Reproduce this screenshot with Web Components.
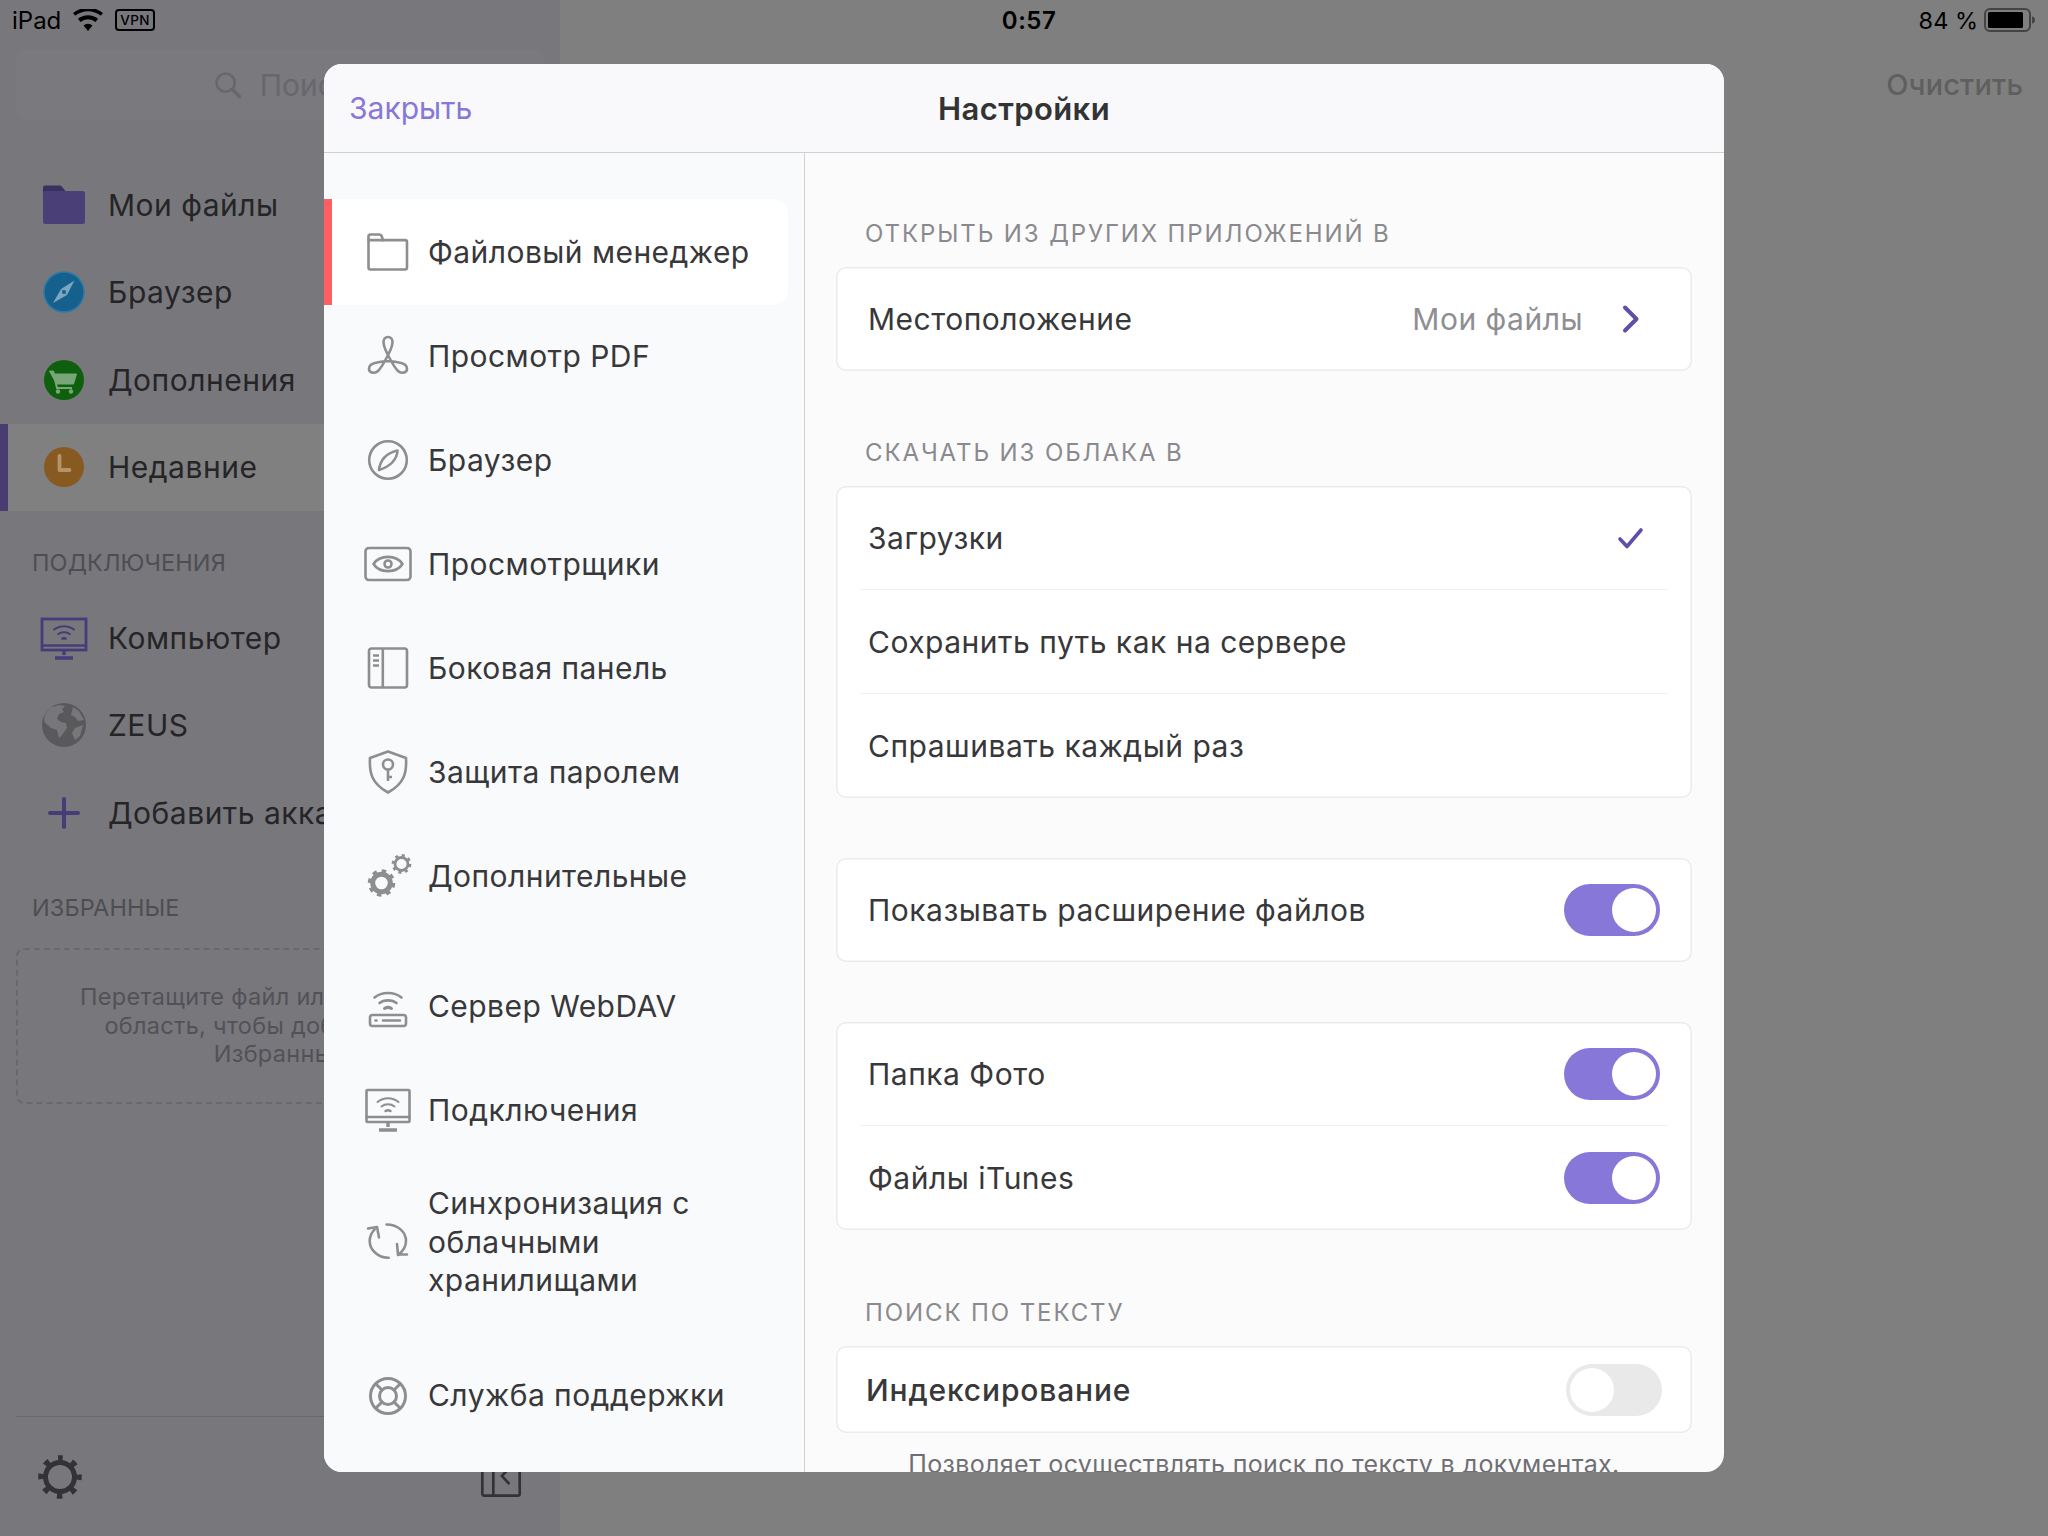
<!DOCTYPE html>
<html lang="ru">
<head>
<meta charset="utf-8">
<title>Настройки</title>
<style>
  html, body { margin: 0; padding: 0; }
  body { font-family: Inter, "Noto Sans", sans-serif; width: 2048px; height: 1536px; overflow: hidden; }
</style>
</head>
<body>
<app-shell>
  <status-bar slot="status"></status-bar>
  <side-panel slot="panel"></side-panel>
  <settings-modal slot="modal"></settings-modal>
</app-shell>

<script>
const GREY = `fill="none" stroke="#8e8e8e" stroke-width="2.6" stroke-linecap="round" stroke-linejoin="round"`;
const ICONS = {
  folder: `<g ${GREY}><path d="M4.500 12V8.500a2 2 0 0 1 2-2h8.500a3 3 0 0 1 2.800 2l1.200 3.600h22a2 2 0 0 1 2 2v25.400a2 2 0 0 1-2 2h-34.500a2 2 0 0 1-2-2Z"/><path d="M4.500 12.100h15"/></g>`,
  pdf: `<path ${GREY} d="M24 5C21 5 19.500 7.500 19.500 10C19.500 15 22 19 24.500 24C27 29 30 35 34 39C37 42 43 41 43 37C43 33 39 31 35 30.500C28 29 20 29 13 30.500C9 31 5 33 5 37C5 41 11 42 14 39C18 35 21 29 23.500 24C26 19 28.500 15 28.500 10C28.500 7.500 27 5 24 5Z"/>`,
  compass: `<g ${GREY}><circle cx="24" cy="24" r="18.800"/><path d="M33.500 14.500c-.5 7-4.500 15-18.500 19.500 1-9 6-16.500 18.500-19.500Z"/></g>`,
  eye: `<g ${GREY}><rect x="1.500" y="8" width="45" height="32" rx="3.500"/><path d="M9.500 24c6-9.500 23-9.500 29 0-6 9.500-23 9.500-29 0Z"/><circle cx="24" cy="24" r="3.500"/></g>`,
  sidebar: `<g ${GREY}><rect x="5" y="4.500" width="38" height="39" rx="2.500"/><path d="M18.800 4.500v39M9 11.500h6M9 16.500h6M9 21.500h6" stroke-linecap="butt"/></g>`,
  shield: `<g ${GREY}><path d="M24 3.500 42 10c.8 14-1 25-18 34.500C7 35 5.200 24 6 10Z"/><circle cx="24" cy="16.500" r="5"/><path d="M24 21.500V33M24 29h4" stroke-linecap="butt"/></g>`,
  gears: `<g fill="none" stroke="#8e8e8e"><circle cx="17.500" cy="31" r="8.800" stroke-width="5"/><circle cx="17.500" cy="31" r="12" stroke-width="3.500" stroke-dasharray="4.400 5"/><circle cx="37.500" cy="12" r="6.500" stroke-width="2.800"/><circle cx="37.500" cy="12" r="8.600" stroke-width="2.600" stroke-dasharray="3 3.750"/></g>`,
  router: `<g ${GREY}><path d="M10.500 15.500c7.500-6 19.500-6 27 0M15.500 21c4.500-3.500 12.500-3.500 17 0"/><path d="M20.500 26.500c2-1.300 5-1.300 7 0" stroke-width="3"/><rect x="6" y="33" width="36" height="11" rx="2.500"/><path d="M19 38.500h17M11.500 38.500h1"/></g>`,
  monitor: `<g ${GREY}><rect x="2.500" y="4" width="43" height="32" rx="1"/><path d="M2.500 31h43" stroke-width="2.400"/><path d="M24 36v5M15 44h18" stroke-width="3.400" stroke-linecap="butt"/><path d="M13.500 16c6-5 15-5 21 0M17.500 20.500c3.800-3 9.200-3 13 0" stroke-width="2"/><path d="M21.500 25c1.500-1 3.500-1 5 0" stroke-width="2.400"/></g>`,
  sync: `<g ${GREY}><path d="M22.500 6.500C34 6.500 42 14 42 23C42 29 38 34 34 37"/><path d="M10.700 11.300C7.500 14.500 5.700 18.500 5.700 23C5.700 32 14 40 24.700 39.700"/><path d="M4 10.500 13 9 15 19.500M33 26 34 36.500H43"/></g>`,
  help: `<g ${GREY}><circle cx="24" cy="24" r="17.500" stroke-width="3"/><circle cx="24" cy="24" r="8.500" stroke-width="3"/><path d="m11.700 11.700 6.300 6.300M36.300 11.700 30 18M11.700 36.300l6.300-6.300M36.300 36.300 30 30" stroke-width="3"/></g>`,
  chevron: `<path d="M17 12.500 28.500 24 17 35.500" fill="none" stroke="#5f4fa8" stroke-width="4" stroke-linecap="round" stroke-linejoin="round"/>`,
  check: `<path d="M14 25l7 7.500L35 16" fill="none" stroke="#5f4fa8" stroke-width="3.600" stroke-linecap="round" stroke-linejoin="round"/>`,
  search: `<g fill="none" stroke="#68676c" stroke-width="3.400" stroke-linecap="round"><circle cx="21" cy="21" r="11.500"/><path d="m30 30 8.500 8.500" stroke-width="4.400"/></g>`,
  sfolder: `<path d="M3 12V6.500a2 2 0 0 1 2-2h14.500a3 3 0 0 1 2.500 1.200L27 12Z" fill="#3b3160"/><rect x="3" y="10" width="42" height="33" rx="2.500" fill="#4b3f78"/>`,
  scompass: `<circle cx="24" cy="24" r="20" fill="#15608c"/><circle cx="24" cy="24" r="20" fill="none" stroke="#2a7bab" stroke-width="1.500"/><path d="M34.500 12.500 27 27l-6-6Z" fill="#7ba5c0"/><path d="M13 35l8-14 6 6Z" fill="#7ba5c0"/><circle cx="24" cy="24" r="2" fill="#15608c"/>`,
  scart: `<circle cx="24" cy="24" r="20" fill="#0e5f0e"/><path d="M9.500 15h3.500l1.500 3h22l-3 10H16.500Z" fill="#79a679" stroke="#79a679" stroke-width="1" stroke-linejoin="round"/><path d="M13 15l4 17h15" fill="none" stroke="#79a679" stroke-width="2"/><circle cx="18" cy="35.500" r="2.200" fill="#79a679"/><circle cx="31" cy="35.500" r="2.200" fill="#79a679"/>`,
  sclock: `<circle cx="24" cy="24" r="20" fill="#875a22"/><path d="M19.500 13v14h10" fill="none" stroke="#b69469" stroke-width="3.800" stroke-linecap="round" stroke-linejoin="round"/>`,
  smonitor: `<g fill="none" stroke="#483c78" stroke-width="2.800"><rect x="2" y="5" width="44" height="31"/><path d="M2 31.500h44" stroke-width="2.600"/><path d="M24 36v5M15 44h18" stroke-width="3.400"/><path d="M13.500 16c6-5 15-5 21 0M17.500 20.500c3.800-3 9.200-3 13 0" stroke-width="2"/><path d="M21.500 25c1.500-1 3.500-1 5 0" stroke-width="2.400"/></g>`,
  sglobe: `<circle cx="24" cy="24" r="22" fill="#59595b"/><path d="M13 6c4-2 8-2 12-1l-3 3 2 3-5 2-2 5 4 3 5 1 1 5-5 7-3 3-2-8-6-2-6-5c-2-5 0-11 6-16ZM33 6l6 4 5 9-6 1-3-4-4-2ZM35 27l8-3-3 11-5 4-3-7Z" fill="#77767b"/>`,
  plus: `<path d="M24 10v28M10 24h28" stroke="#483c78" stroke-width="4" stroke-linecap="round" fill="none"/>`,
  gear: `<circle cx="24" cy="24" r="14.500" fill="none" stroke="#333336" stroke-width="5"/><circle cx="24" cy="24" r="19" fill="none" stroke="#333336" stroke-width="5.500" stroke-dasharray="5.500 9.420" stroke-dashoffset="2.750" transform="rotate(-90 24 24)"/>`,
  collapse: `<g fill="none" stroke="#333336" stroke-width="2.800"><rect x="4.500" y="4.500" width="39" height="39" rx="2"/><path d="M16 4.500v39"/><path d="M32 15l-7 8 7 7.500" stroke-linecap="round"/></g>`
};

class UiIcon extends HTMLElement {
  connectedCallback() {
    const size = this.getAttribute("size") || 48;
    this.attachShadow({ mode: "open" }).innerHTML = `
      <style>:host { display: block; width: ${size}px; height: ${size}px; flex: none; } svg { display: block; }</style>
      <svg width="${size}" height="${size}" viewBox="0 0 48 48">${ICONS[this.getAttribute("name")]}</svg>`;
  }
}

class AppShell extends HTMLElement {
  constructor() {
    super();
    this.attachShadow({ mode: "open" }).innerHTML = `
      <style>
        :host {
          display: block; position: relative; width: 2048px; height: 1536px; overflow: hidden;
          background: linear-gradient(90deg, #78777c 560px, #7f7f7f 560px);
        }
        .main { display: flex; height: 1496px; }
        .panel { width: 560px; flex: none; }
        .right { flex: 1; display: flex; justify-content: flex-end; padding: 24px 25px 0 0; color: #5f5f5f; font-size: 29px; font-weight: 500; line-height: 42px; letter-spacing: .1px; }
      </style>
      <slot name="status"></slot>
      <div class="main">
        <div class="panel"><slot name="panel"></slot></div>
        <div class="right">Очистить</div>
      </div>
      <slot name="modal"></slot>`;
  }
}

class StatusBar extends HTMLElement {
  constructor() {
    super();
    this.attachShadow({ mode: "open" }).innerHTML = `
      <style>
        :host { display: grid; grid-template-columns: 1fr auto 1fr; align-items: center; height: 40px; font-size: 24px; color: #000; padding: 0 12px; box-sizing: border-box; }
        .l, .r { display: flex; align-items: center; }
        .l { gap: 12px; }
        .r { justify-content: flex-end; gap: 6px; font-size: 23.500px; }
        .t { font-weight: 600; font-size: 24px; letter-spacing: .5px; margin-left: 10px; }
        .vpn { font-size: 13.500px; font-weight: 500; line-height: 18px; border: 2px solid #000; border-radius: 4px; padding: 0 3px; margin-left: 0; letter-spacing: .3px; }
        svg { display: block; }
      </style>
      <div class="l">
        <span>iPad</span>
        <svg width="30" height="22" viewBox="0 0 30 22"><path d="M15 22 10.500 16.500a7 7 0 0 1 9 0ZM7.500 13a11.500 11.500 0 0 1 15 0l2.600-3.200a16 16 0 0 0-20.200 0ZM2.200 6.800a20 20 0 0 1 25.600 0L30 4A24 24 0 0 0 0 4Z" fill="#000"/></svg>
        <span class="vpn">VPN</span>
      </div>
      <div class="t">0:57</div>
      <div class="r">
        <span>84 %</span>
        <svg width="52" height="26" viewBox="0 0 52 26"><rect x="1" y="2" width="45" height="22" rx="5" fill="none" stroke="#444" stroke-width="2"/><rect x="4" y="5" width="35" height="16" rx="1.500" fill="#000"/><path d="M48 9.500c2 .3 3 1.500 3 3.500s-1 3.200-3 3.500Z" fill="#444"/></svg>
      </div>`;
  }
}

class SideItem extends HTMLElement {
  connectedCallback() {
    const icon = this.getAttribute("icon");
    this.attachShadow({ mode: "open" }).innerHTML = `
      <style>
        :host { display: flex; align-items: center; height: 87.500px; padding-left: 40px; gap: 20px; box-sizing: border-box; font-size: 30px; letter-spacing: .5px; color: #252527; white-space: nowrap; }
        :host([active]) { background: #808080; box-shadow: inset 8px 0 0 #483c70; }
      </style>
      <ui-icon name="${icon}"></ui-icon><slot></slot>`;
  }
}

class SidePanel extends HTMLElement {
  constructor() {
    super();
    this.attachShadow({ mode: "open" }).innerHTML = `
      <style>
        :host { display: flex; flex-direction: column; height: 100%; font-size: 30px; }
        .search { margin: 10px 16px 0; height: 70px; border-radius: 10px; background: #7a797e; display: flex; align-items: center; justify-content: center; gap: 13px; color: #68676c; }
        .items { margin-top: 41px; }
        .label { margin: 36px 0 0 32px; height: 30px; line-height: 30px; font-size: 23.500px; letter-spacing: .1px; color: #4e4e52; }
        .conn { margin-top: 15px; }
        .fav { margin: 25.500px 16px 0; height: 156px; box-sizing: border-box; border: 2px dashed #69686d; border-radius: 8px; display: flex; flex-direction: column; align-items: center; justify-content: center; color: #525256; font-size: 23.500px; letter-spacing: .3px; line-height: 28.500px; text-align: center; white-space: nowrap; }
        .foot { margin: auto 16px 0; height: 120px; border-top: 1px solid #68676c; display: flex; align-items: center; justify-content: space-between; padding: 0 0 0 20px; box-sizing: border-box; }
        .foot ui-icon:last-child { margin-right: 20px; }
      </style>
      <div class="search"><ui-icon name="search" size="38"></ui-icon><span>Поиск</span></div>
      <div class="items">
        <side-item icon="sfolder">Мои файлы</side-item>
        <side-item icon="scompass">Браузер</side-item>
        <side-item icon="scart">Дополнения</side-item>
        <side-item icon="sclock" active>Недавние</side-item>
      </div>
      <div class="label" style="margin-top:37px">ПОДКЛЮЧЕНИЯ</div>
      <div class="conn" style="margin-top:16px">
        <side-item icon="smonitor">Компьютер</side-item>
        <side-item icon="sglobe">ZEUS</side-item>
        <side-item icon="plus">Добавить аккаунт</side-item>
      </div>
      <div class="label">ИЗБРАННЫЕ</div>
      <div class="fav"><div>Перетащите файл или папку в эту</div><div>область, чтобы добавить их в</div><div>Избранные</div></div>
      <div class="foot"><ui-icon name="gear"></ui-icon><ui-icon name="collapse" size="46"></ui-icon></div>`;
  }
}

class NavItem extends HTMLElement {
  connectedCallback() {
    this.attachShadow({ mode: "open" }).innerHTML = `
      <style>
        :host { display: flex; align-items: center; min-height: 104px; padding: 0 0 0 40px; gap: 16px; box-sizing: border-box; color: #38383a; font-size: 30px; letter-spacing: .45px; line-height: 38.500px; }
        :host([selected]) { background: #fff; margin: -1px 16px -1px 0; min-height: 106px; border-radius: 0 16px 16px 0; box-shadow: inset 8px 0 0 #ff5f61; }
        :host([multi]) { padding-top: 22px; padding-bottom: 22px; }
        .t { width: 335px; }
      </style>
      <ui-icon name="${this.getAttribute("icon")}"></ui-icon><div class="t"><slot></slot></div>`;
  }
}

class SectionLabel extends HTMLElement {
  constructor() {
    super();
    this.attachShadow({ mode: "open" }).innerHTML = `
      <style>:host { display: block; height: 30px; line-height: 34px; padding-left: 29px; margin-bottom: 20px; font-size: 24px; letter-spacing: 1.900px; color: #8a8a8e; text-transform: uppercase; white-space: nowrap; }</style>
      <slot></slot>`;
  }
}

class SettingsCard extends HTMLElement {
  constructor() {
    super();
    this.attachShadow({ mode: "open" }).innerHTML = `
      <style>:host { display: block; background: #fff; border-radius: 10px; box-shadow: inset 0 0 0 1.500px #ebebeb; }</style>
      <slot></slot>`;
  }
}

class SettingsRow extends HTMLElement {
  constructor() {
    super();
    this.attachShadow({ mode: "open" }).innerHTML = `
      <style>
        :host { display: flex; align-items: center; justify-content: space-between; height: 104px; margin: 0 24px; padding: 0 8px; box-sizing: border-box; font-size: 30px; letter-spacing: .5px; color: #38383a; white-space: nowrap; }
        :host([divided]) { border-bottom: 1.500px solid #f0f0f0; }
        :host([compact]) { height: 87px; padding: 0 6px; font-weight: 500; letter-spacing: .85px; }
        .end { display: flex; align-items: center; }
      </style>
      <div><slot></slot></div>
      <div class="end"><slot name="end"></slot></div>`;
  }
}

class ToggleSwitch extends HTMLElement {
  constructor() {
    super();
    this.attachShadow({ mode: "open" }).innerHTML = `
      <style>
        :host { display: flex; width: 96px; height: 52px; padding: 4px; box-sizing: border-box; border-radius: 26px; background: #e9e9e9; }
        :host([on]) { background: #8677d9; justify-content: flex-end; }
        i { width: 44px; height: 44px; border-radius: 50%; background: #fff; }
      </style>
      <i></i>`;
  }
}

class SettingsModal extends HTMLElement {
  constructor() {
    super();
    this.attachShadow({ mode: "open" }).innerHTML = `
      <style>
        :host { position: absolute; left: 324px; top: 64px; width: 1400px; height: 1408px; border-radius: 18px; overflow: hidden; display: flex; flex-direction: column; background: #fbfbfc; }
        header { flex: none; height: 89px; box-sizing: border-box; border-bottom: 1.500px solid #d0d0d2; background: #f9f9fb; display: grid; grid-template-columns: 1fr auto 1fr; align-items: center; padding: 0 25px; font-size: 30px; }
        .close { color: #8677d9; }
        .title { font-weight: 600; font-size: 31px; letter-spacing: .4px; color: #333; }
        .body { flex: 1; display: flex; min-height: 0; }
        nav { flex: none; width: 481px; box-sizing: border-box; padding-top: 47px; background: #f9fafc; border-right: 1.500px solid #d0d0d2; }
        .g { margin-top: 26px; }
        .h { margin-top: 22px; }
        main { flex: 1; padding: 64px 32px 0 31px; overflow: hidden; }
        .gap65 { margin-top: 65px; }
        .gap66 { margin-top: 66px; }
        .gap60 { margin-top: 60px; }
        .value { color: #8e8e93; margin-right: 25px; }
        .hint { margin-top: 16px; text-align: center; font-size: 25px; letter-spacing: .35px; line-height: 30px; color: #6f6f73; white-space: nowrap; }
        ui-icon[name=chevron] { margin-right: 4px; }
        ui-icon[name=check] { margin-right: 6px; }
      </style>
      <header><div class="close">Закрыть</div><div class="title">Настройки</div><div></div></header>
      <div class="body">
        <nav>
          <nav-item icon="folder" selected>Файловый менеджер</nav-item>
          <nav-item icon="pdf">Просмотр PDF</nav-item>
          <nav-item icon="compass">Браузер</nav-item>
          <nav-item icon="eye">Просмотрщики</nav-item>
          <nav-item icon="sidebar">Боковая панель</nav-item>
          <nav-item icon="shield">Защита паролем</nav-item>
          <nav-item icon="gears">Дополнительные</nav-item>
          <nav-item class="g" icon="router">Сервер WebDAV</nav-item>
          <nav-item icon="monitor">Подключения</nav-item>
          <nav-item icon="sync" multi>Синхронизация с облачными хранилищами</nav-item>
          <nav-item class="h" icon="help">Служба поддержки</nav-item>
        </nav>
        <main>
          <section-label>Открыть из других приложений в</section-label>
          <settings-card>
            <settings-row>Местоположение<span class="value" slot="end">Мои файлы</span><ui-icon name="chevron" slot="end"></ui-icon></settings-row>
          </settings-card>
          <section-label class="gap65">Скачать из облака в</section-label>
          <settings-card>
            <settings-row divided>Загрузки<ui-icon name="check" slot="end"></ui-icon></settings-row>
            <settings-row divided>Сохранить путь как на сервере</settings-row>
            <settings-row>Спрашивать каждый раз</settings-row>
          </settings-card>
          <settings-card class="gap60">
            <settings-row>Показывать расширение файлов<toggle-switch on slot="end"></toggle-switch></settings-row>
          </settings-card>
          <settings-card class="gap60">
            <settings-row divided>Папка Фото<toggle-switch on slot="end"></toggle-switch></settings-row>
            <settings-row>Файлы iTunes<toggle-switch on slot="end"></toggle-switch></settings-row>
          </settings-card>
          <section-label class="gap66">Поиск по тексту</section-label>
          <settings-card>
            <settings-row compact>Индексирование<toggle-switch slot="end"></toggle-switch></settings-row>
          </settings-card>
          <div class="hint">Позволяет осуществлять поиск по тексту в документах.</div>
        </main>
      </div>`;
  }
}

customElements.define("ui-icon", UiIcon);
customElements.define("app-shell", AppShell);
customElements.define("status-bar", StatusBar);
customElements.define("side-item", SideItem);
customElements.define("side-panel", SidePanel);
customElements.define("nav-item", NavItem);
customElements.define("section-label", SectionLabel);
customElements.define("settings-card", SettingsCard);
customElements.define("settings-row", SettingsRow);
customElements.define("toggle-switch", ToggleSwitch);
customElements.define("settings-modal", SettingsModal);
</script>
</body>
</html>
